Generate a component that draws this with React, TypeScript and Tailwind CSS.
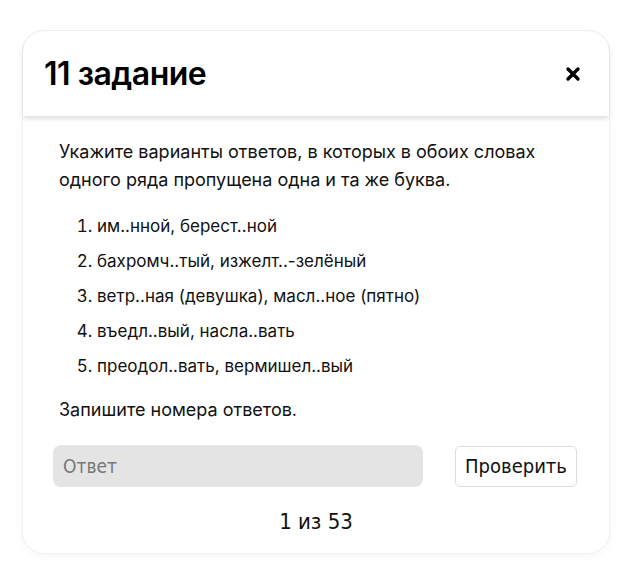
import { X } from 'lucide-react';

const items = [
  'им..нной, берест..ной',
  'бахромч..тый, изжелт..-зелёный',
  'ветр..ная (девушка), масл..ное (пятно)',
  'въедл..вый, насла..вать',
  'преодол..вать, вермишел..вый',
];

export default function App() {
  return (
    <div className="min-h-[586px] w-[640px] bg-white pt-[30px] pl-[22px] font-['Inter','Noto_Sans',sans-serif] text-[#111]">
      <div className="w-[588px] rounded-[22px] border border-[#f1f1f1] bg-white shadow-[0_2px_8px_rgba(0,0,0,0.04)]">
        {/* Header */}
        <div className="flex h-[85px] items-center justify-between rounded-t-[22px] pl-[21px] pr-[26px] shadow-[0_3px_4px_rgba(0,0,0,0.12)]">
          <h1 className="text-[32px] font-semibold tracking-[-0.5px] text-black">11 задание</h1>
          <X className="h-[20px] w-[20px] text-black" strokeWidth={4} />
        </div>

        {/* Body */}
        <div className="px-[30px] pt-[22px] pb-[18px]">
          <p className="px-[6px] text-[18px] leading-[28px] text-[#111]">
            Укажите варианты ответов, в которых в обоих словах одного ряда пропущена одна и та же буква.
          </p>
          <ol className="mt-[22px] list-decimal pl-[44px] text-[17px]">
            {items.map((t) => (
              <li key={t} className="h-[35px] leading-[20px]">
                {t}
              </li>
            ))}
          </ol>
          <p className="mt-[8px] px-[6px] text-[18px] leading-[22px]">Запишите номера ответов.</p>

          <div className="mt-[24px] flex items-center justify-between">
            <input
              placeholder="Ответ"
              className="h-[42px] w-[370px] rounded-[8px] bg-[#e4e4e4] px-[10px] font-['DejaVu_Sans',sans-serif] font-stretch-condensed text-[19px] placeholder:text-[#777] outline-none"
            />
            <button className="mr-[2px] h-[41px] w-[122px] rounded-[5px] border border-[#ddd] bg-white font-['DejaVu_Sans',sans-serif] font-stretch-condensed text-[20px] text-[#111]">
              Проверить
            </button>
          </div>

          <div className="mt-[22px] text-center font-['DejaVu_Sans',sans-serif] font-stretch-condensed text-[22px] leading-[26px] text-[#111]">
            1 из 53
          </div>
        </div>
      </div>
    </div>
  );
}
